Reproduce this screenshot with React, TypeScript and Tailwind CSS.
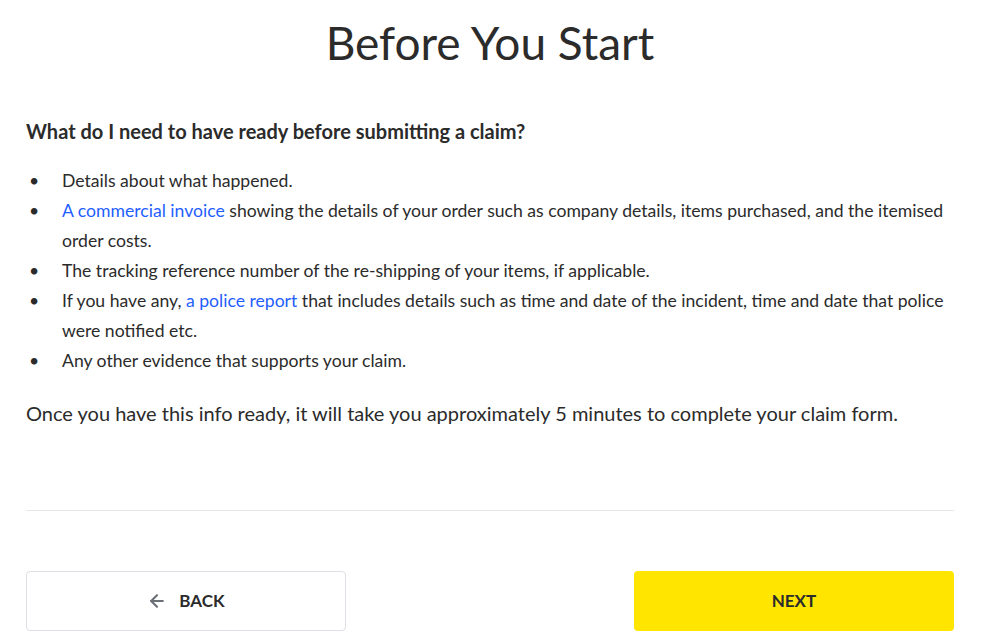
import { ArrowLeft } from "lucide-react";

const items = [
  { text: "Details about what happened." },
  {
    link: "A commercial invoice",
    text: " showing the details of your order such as company details, items purchased, and the itemised order costs.",
  },
  {
    text: "The tracking reference number of the re-shipping of your items, if applicable.",
  },
  {
    pre: "If you have any, ",
    link: "a police report",
    text: " that includes details such as time and date of the incident, time and date that police were notified etc.",
  },
  { text: "Any other evidence that supports your claim." },
];

const App = () => {
  return (
    <div className="min-h-screen bg-white text-[#2b2b2b] font-['Lato',sans-serif]">
      <div className="ml-[26px] w-[928px]">
        <h1 className="h-[84px] flex items-center justify-center text-[46px] font-normal">
          Before You Start
        </h1>

        <h2 className="mt-[35px] text-[20px] leading-[24px] font-bold">
          What do I need to have ready before submitting a claim?
        </h2>

        <ul className="mt-[23px] text-[17.6px] leading-[30px]">
          {items.map((item, i) => (
            <li key={i} className="flex">
              <span className="w-[36px] shrink-0 pl-[3px]">•</span>
              <p className="w-[890px]">
                {item.pre}
                {item.link && (
                  <a href="#" className="text-[#1f5eff]">
                    {item.link}
                  </a>
                )}
                {item.text}
              </p>
            </li>
          ))}
        </ul>

        <p className="mt-[22px] text-[20px] leading-[30px]">
          Once you have this info ready, it will take you approximately 5
          minutes to complete your claim form.
        </p>

        <div className="mt-[82px] h-px bg-[#e5e7eb]" />

        <div className="mt-[60px] flex justify-between">
          <button className="w-[320px] h-[60px] flex items-center justify-center gap-[12px] border border-[#dcdfe4] rounded-[4px] bg-white">
            <ArrowLeft className="w-[20px] h-[20px] text-[#6b6f76]" strokeWidth={2.5} />
            <span className="text-[17px] font-bold">BACK</span>
          </button>
          <button className="w-[320px] h-[60px] flex items-center justify-center rounded-[4px] bg-[#ffe500]">
            <span className="text-[17px] font-bold">NEXT</span>
          </button>
        </div>
      </div>
    </div>
  );
};

export default App;
